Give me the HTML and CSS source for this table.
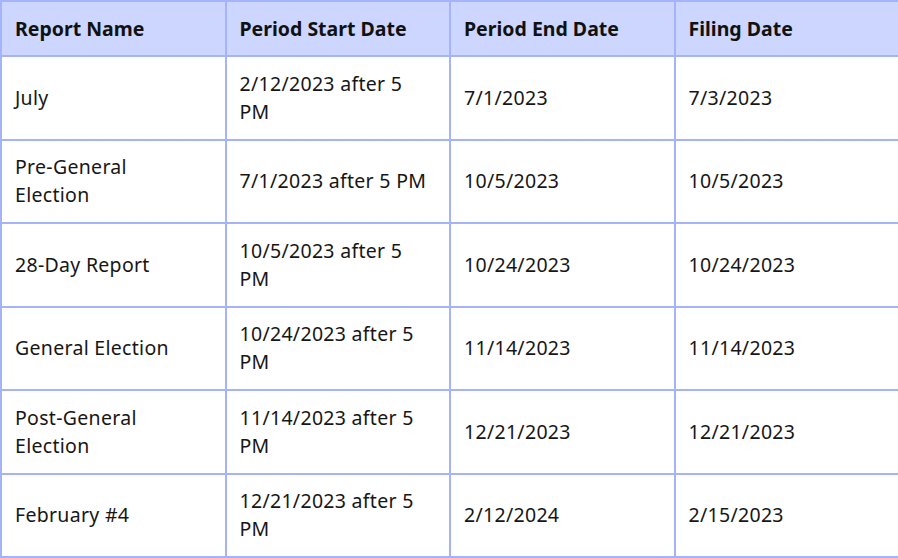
FILE: index.html
```html
<!DOCTYPE html>
<html>
<head>
<meta charset="utf-8">
<link rel="stylesheet" href="styles.css">
</head>
<body>
<table class="report-table">
  <thead>
    <tr>
      <th>Report Name</th>
      <th>Period Start Date</th>
      <th>Period End Date</th>
      <th>Filing Date</th>
    </tr>
  </thead>
  <tbody>
    <tr><td>July</td><td>2/12/2023 after 5<br>PM</td><td>7/1/2023</td><td>7/3/2023</td></tr>
    <tr><td>Pre-General<br>Election</td><td>7/1/2023 after 5 PM</td><td>10/5/2023</td><td>10/5/2023</td></tr>
    <tr><td>28-Day Report</td><td>10/5/2023 after 5<br>PM</td><td>10/24/2023</td><td>10/24/2023</td></tr>
    <tr><td>General Election</td><td>10/24/2023 after 5<br>PM</td><td>11/14/2023</td><td>11/14/2023</td></tr>
    <tr><td>Post-General<br>Election</td><td>11/14/2023 after 5<br>PM</td><td>12/21/2023</td><td>12/21/2023</td></tr>
    <tr><td>February #4</td><td>12/21/2023 after 5<br>PM</td><td>2/12/2024</td><td>2/15/2023</td></tr>
  </tbody>
</table>
</body>
</html>
```

FILE: styles.css
```css
html, body {
  margin: 0;
  padding: 0;
  background: #ffffff;
}
.report-table {
  border-collapse: collapse;
  table-layout: fixed;
  width: 900px;
  margin: 0;
  font-family: "Noto Sans", "Open Sans", sans-serif;
  font-size: 19.5px;
  letter-spacing: 0.3px;
  line-height: 28px;
  color: #161616;
}
.report-table th,
.report-table td {
  border: 2px solid #a3b3fc;
  padding: 0 12px 0 13px;
  text-align: left;
  vertical-align: middle;
}
.report-table th {
  background: #ccd6fe;
  font-weight: 700;
  letter-spacing: 0;
  height: 53px;
  color: #111;
}
.report-table td {
  height: 81.5px;
  font-weight: 400;
}
```
